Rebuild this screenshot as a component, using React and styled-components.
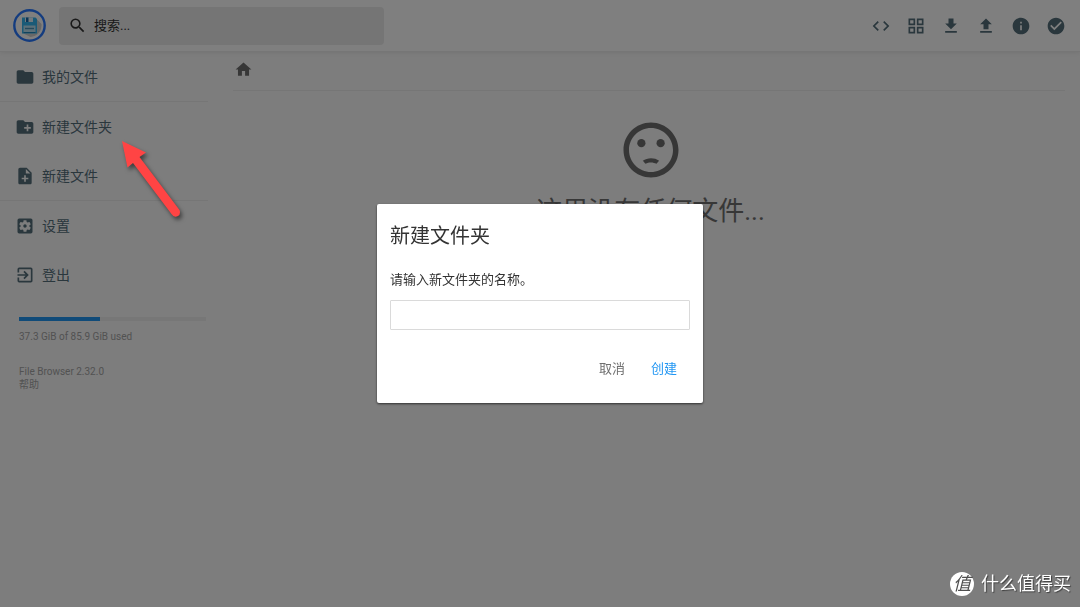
import React from "react";
import styled, { createGlobalStyle, css } from "styled-components";
import {
  MdSearch, MdCode, MdGridView, MdFileDownload, MdFileUpload, MdInfo, MdCheckCircle,
  MdFolder, MdCreateNewFolder, MdNoteAdd, MdSettingsApplications, MdExitToApp,
  MdHome, MdSentimentDissatisfied,
} from "react-icons/md";

const GlobalStyle = createGlobalStyle`
  *, *::before, *::after { box-sizing: border-box; }
  body {
    margin: 0;
    background: #fafafa;
    color: #333;
    font-family: Roboto, "Noto Sans CJK SC", sans-serif;
    font-size: 13px;
  }
  button, input { font: inherit; color: inherit; }
`;

const Page = styled.div`
  min-height: 100vh;
  display: flex;
  flex-direction: column;
`;

const Header = styled.header`
  height: 52px;
  padding: 0 14px 0 13px;
  display: flex;
  align-items: center;
  background: #fff;
  border-bottom: 1px solid rgba(0, 0, 0, 0.075);
  box-shadow: 0 0 5px rgba(0, 0, 0, 0.1);
`;

const Logo = styled.svg`
  width: 33px;
  height: 33px;
  flex: none;
  margin-right: 13px;
`;

const SearchBox = styled.label`
  flex: 0 1 325px;
  height: 38px;
  padding: 0 9px;
  display: flex;
  align-items: center;
  gap: 7px;
  background: #ebebeb;
  border-radius: 4px;
  svg { font-size: 19px; flex: none; }
`;

const SearchInput = styled.input`
  flex: 1;
  min-width: 0;
  padding: 0;
  border: 0;
  background: transparent;
  outline: 0;
  &::placeholder { color: #333; opacity: 1; }
`;

const HeaderActions = styled.div`
  margin-left: auto;
  display: flex;
  gap: 15px;
`;

const IconButton = styled.button`
  padding: 0;
  border: 0;
  background: none;
  color: #546e7a;
  font-size: 20px;
  display: flex;
`;

const Body = styled.div`
  flex: 1;
  display: flex;
  align-items: flex-start;
`;

const Sidebar = styled.nav`
  flex: none;
  width: 208px;
`;

const Group = styled.div`
  & + & { border-top: 1px solid rgba(0, 0, 0, 0.05); }
`;

const NavAction = styled.button`
  width: 100%;
  height: 49px;
  padding: 0 15px;
  display: flex;
  align-items: center;
  gap: 7px;
  border: 0;
  background: none;
  color: #546e7a;
  font-size: 14px;
  line-height: 20px;
  svg { font-size: 20px; }
`;

const Usage = styled.footer`
  padding: 18px 2px 0 19px;
  color: #a5a5a5;
  font-size: 10px;
  line-height: 13px;
`;

const Track = styled.div`
  height: 4px;
  margin-bottom: 9px;
  background: #eee;
`;

const Fill = styled.div`
  height: 100%;
  background: #2196f3;
`;

const Credits = styled.div`
  margin-top: 22px;
  a { display: block; color: inherit; text-decoration: none; }
`;

const Main = styled.main`
  flex: 1;
  min-width: 0;
  padding: 0 15px 0 25px;
`;

const Breadcrumbs = styled.div`
  height: 39px;
  padding: 8px 1px;
  border-bottom: 1px solid rgba(0, 0, 0, 0.05);
  a { display: inline-flex; color: #6f6f6f; font-size: 19px; }
`;

const Empty = styled.h2`
  margin: 26px 0 0;
  padding-left: 3px;
  display: flex;
  flex-direction: column;
  align-items: center;
  gap: 9px;
  font-size: 26px;
  line-height: 38px;
  font-weight: 400;
  color: #6f6f6f;
  svg { font-size: 66px; }
`;

const Overlay = styled.div`
  position: fixed;
  inset: 0;
  display: flex;
  align-items: center;
  justify-content: center;
  background: rgba(0, 0, 0, 0.5);
`;

const Dialog = styled.form`
  width: 326px;
  max-width: 90%;
  padding: 13px;
  background: #fff;
  border-radius: 2px;
  box-shadow: 0 1px 3px rgba(0, 0, 0, 0.3), 0 1px 2px rgba(0, 0, 0, 0.4);
`;

const Title = styled.h2`
  margin: 0 0 15px;
  font-size: 20px;
  line-height: 38px;
  font-weight: 400;
`;

const Prompt = styled.label`
  display: block;
  margin-bottom: 13px;
  line-height: 20px;
  color: #333;
  span { display: block; margin-bottom: 10px; }
`;

const NameInput = styled.input`
  display: block;
  width: 100%;
  height: 30px;
  padding: 0 7px;
  border: 1px solid #dadada;
  border-radius: 1px;
  outline: 0;
`;

const DialogActions = styled.div`
  padding: 9px 0 4px;
  display: flex;
  justify-content: flex-end;
`;

const FlatButton = styled.button`
  padding: 7px 13px;
  border: 0;
  background: none;
  line-height: 20px;
  color: #6f6f6f;
  ${(p) => p.$primary && css`color: #2196f3;`}
`;

const Pointer = styled.svg`
  position: absolute;
  left: 112px;
  top: 132px;
  width: 80px;
  height: 96px;
  filter: drop-shadow(2px 3px 2px rgba(0, 0, 0, 0.5));
  pointer-events: none;
`;

const Watermark = styled.div`
  position: fixed;
  right: 9px;
  bottom: 10px;
  display: flex;
  align-items: center;
  gap: 7px;
  color: #fff;
  font-size: 18px;
  line-height: 26px;
  text-shadow: 1px 1px 1px rgba(0, 0, 0, 0.5);
`;

const Badge = styled.span`
  width: 24px;
  height: 24px;
  display: flex;
  align-items: center;
  justify-content: center;
  border-radius: 50%;
  background: #fff;
  color: #4f4f4f;
  font-style: italic;
  text-shadow: none;
`;

const headerActions = [
  ["切换命令行", MdCode],
  ["切换显示方式", MdGridView],
  ["下载", MdFileDownload],
  ["上传", MdFileUpload],
  ["信息", MdInfo],
  ["选择多个", MdCheckCircle],
];

const navGroups = [
  [["我的文件", MdFolder]],
  [["新建文件夹", MdCreateNewFolder], ["新建文件", MdNoteAdd]],
  [["设置", MdSettingsApplications], ["登出", MdExitToApp]],
];

const usedPercent = (37.3 / 85.9) * 100;

export default function App() {
  return (
    <>
      <GlobalStyle />
      <Page>
        <Header>
          <Logo viewBox="0 0 33 33" aria-hidden="true">
            <circle cx="16.500" cy="16.500" r="15.200" fill="#fff" stroke="#2979ff" strokeWidth="2.400" />
            <path d="M24 10.500l4.500 4.500a12 12 0 0 1-11 13l-8-4z" fill="#d0d0d0" />
            <path d="M9 8.500h13.500l1.500 1.500v14.500H9z" fill="#35b4ee" />
            <path d="M12 8.500h8v4.500h-8z" fill="#e4f3fb" />
            <path d="M13 8.500h2.500v4.500h-2.500z" fill="#1769aa" />
            <path d="M10.500 16.500h12v7h-12z" fill="#b9e0f3" />
            <path d="M12 19.500h9" stroke="#4a93b8" strokeWidth="1.400" />
            <path d="M10.500 23.500h12" stroke="#1f86bd" />
          </Logo>
          <SearchBox>
            <MdSearch />
            <SearchInput type="text" placeholder="搜索..." aria-label="搜索" />
          </SearchBox>
          <HeaderActions>
            {headerActions.map(([label, Icon]) => (
              <IconButton key={label} type="button" aria-label={label}><Icon /></IconButton>
            ))}
          </HeaderActions>
        </Header>
        <Body>
          <Sidebar>
            {navGroups.map((group, i) => (
              <Group key={i}>
                {group.map(([label, Icon]) => (
                  <NavAction key={label} type="button"><Icon />{label}</NavAction>
                ))}
              </Group>
            ))}
            <Usage>
              <Track><Fill style={{ width: `${usedPercent}%` }} /></Track>
              37.3 GiB of 85.9 GiB used
              <Credits>
                <a href="#version">File Browser 2.32.0</a>
                <a href="#help">帮助</a>
              </Credits>
            </Usage>
          </Sidebar>
          <Main>
            <Breadcrumbs><a href="#home" aria-label="主页"><MdHome /></a></Breadcrumbs>
            <Empty><MdSentimentDissatisfied /><span>这里没有任何文件...</span></Empty>
          </Main>
        </Body>
      </Page>
      <Overlay>
        <Dialog role="dialog" aria-labelledby="dialog-title" onSubmit={(e) => e.preventDefault()}>
          <Title id="dialog-title">新建文件夹</Title>
          <Prompt>
            <span>请输入新文件夹的名称。</span>
            <NameInput type="text" />
          </Prompt>
          <DialogActions>
            <FlatButton type="button">取消</FlatButton>
            <FlatButton type="submit" $primary>创建</FlatButton>
          </DialogActions>
        </Dialog>
      </Overlay>
      <Pointer viewBox="0 0 80 96" aria-hidden="true">
        <path d="M10 9L34 20.500 27.500 25 67.500 78Q69 82 66 84 62 86 59.500 82L21 31 15.500 35.500z" fill="#ff4444" />
      </Pointer>
      <Watermark><Badge>值</Badge>什么值得买</Watermark>
    </>
  );
}
